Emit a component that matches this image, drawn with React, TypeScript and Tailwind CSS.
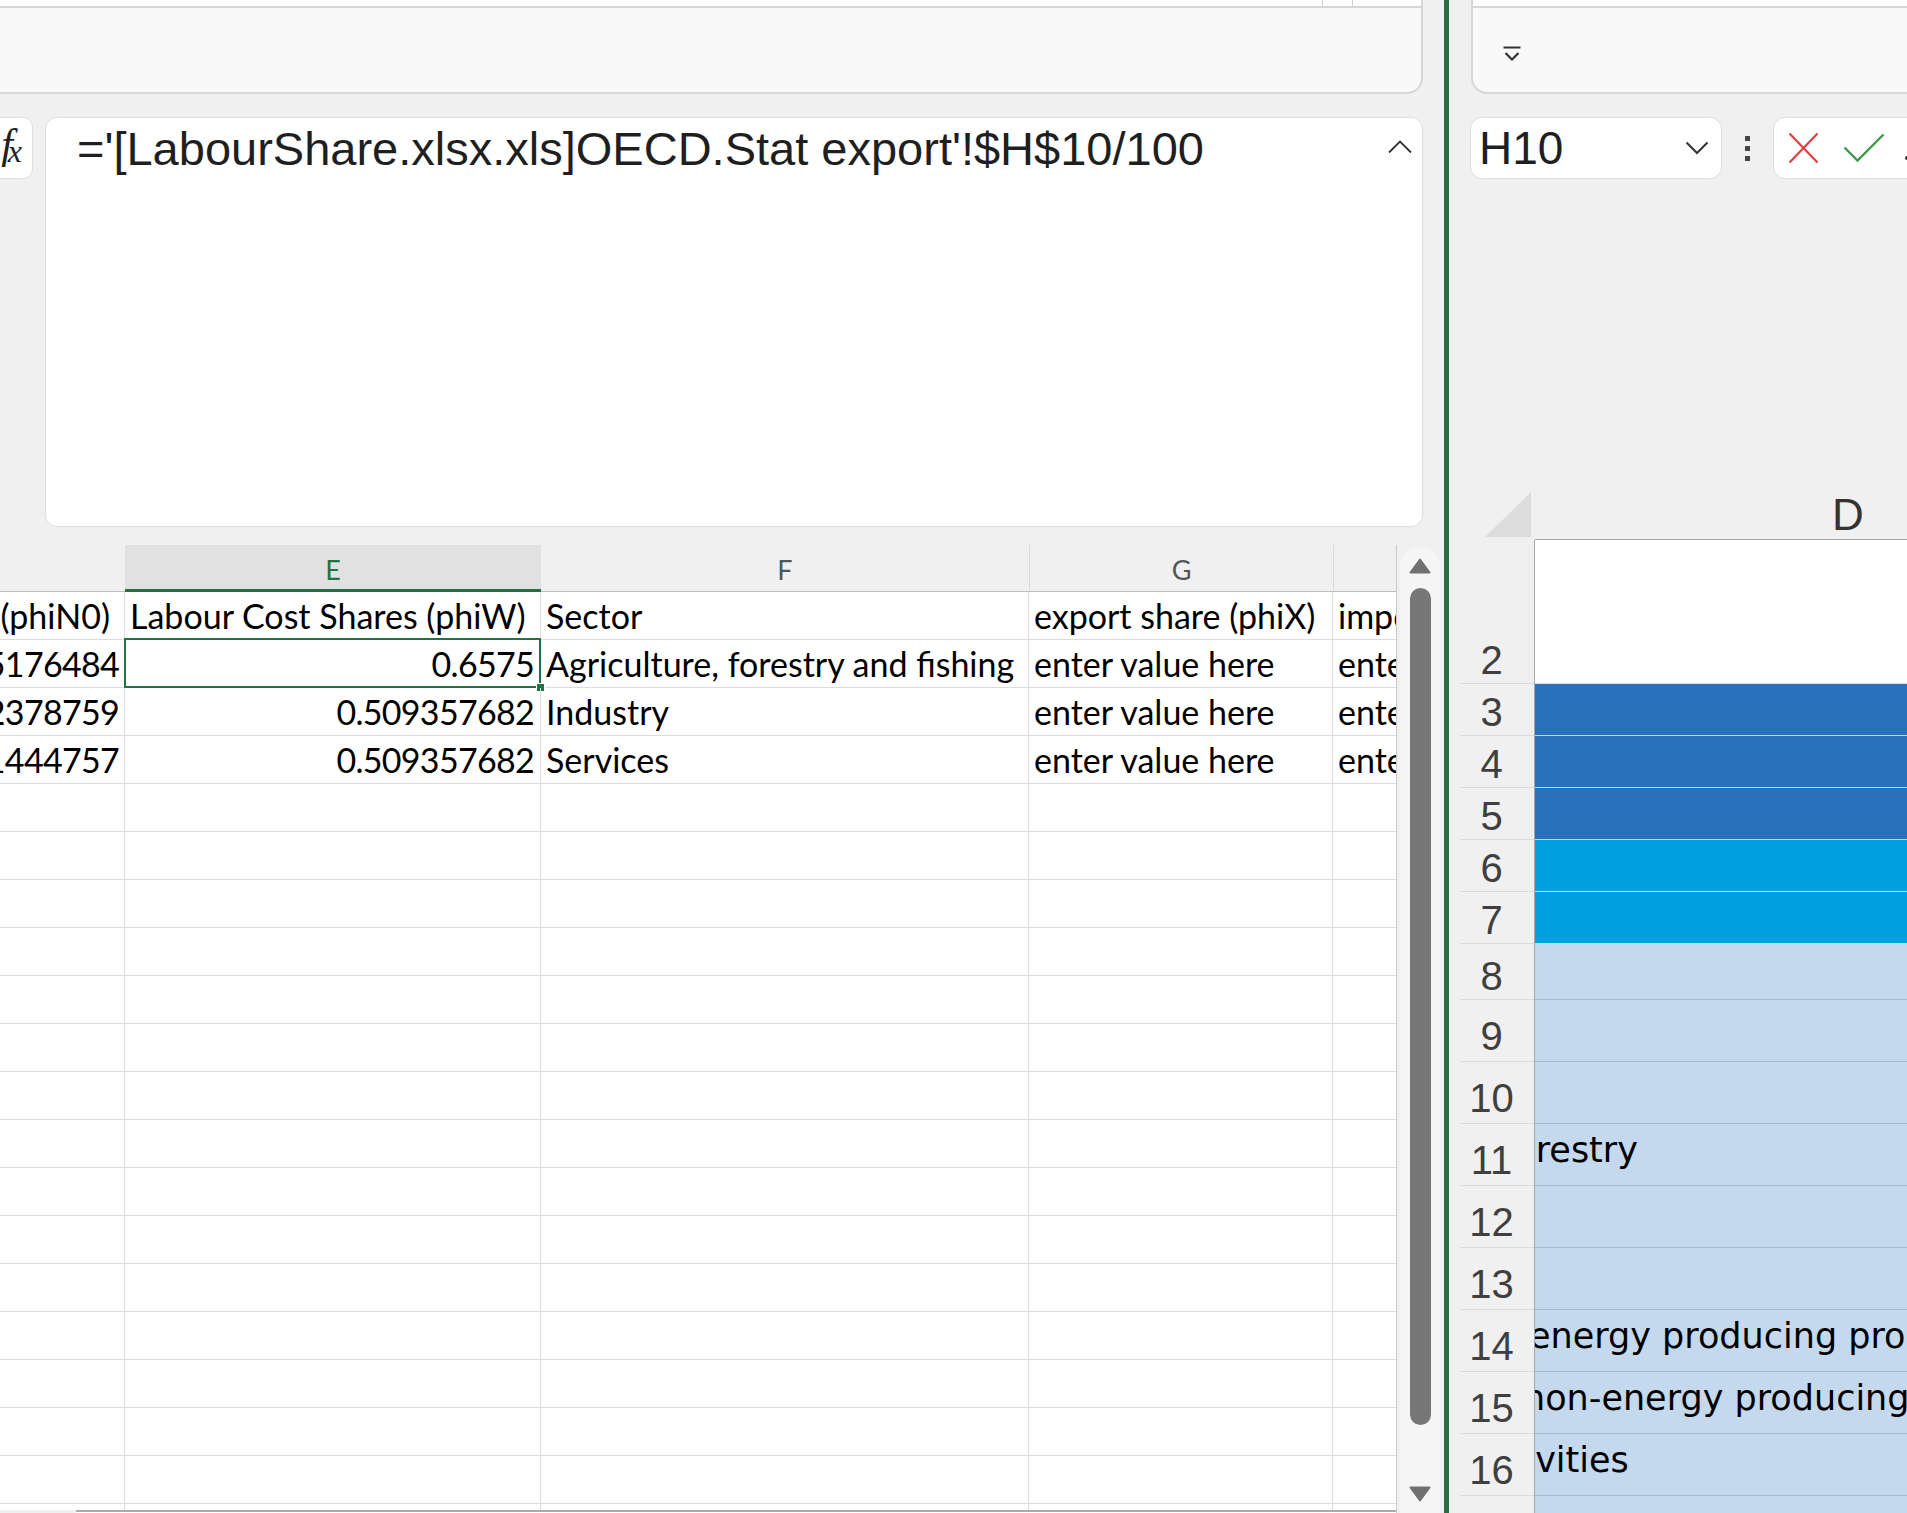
import React from 'react';

type LeftRow = { d: string; e: string; eNum: boolean; f: string; g: string; h: string };

const leftRows: LeftRow[] = [
  { d: 'Parameter (phiN0)', e: 'Labour Cost Shares (phiW)', eNum: false, f: 'Sector', g: 'export share (phiX)', h: 'import share (phiM)' },
  { d: '0.525176484', e: '0.6575', eNum: true, f: 'Agriculture, forestry and fishing', g: 'enter value here', h: 'enter value here' },
  { d: '0.52378759', e: '0.509357682', eNum: true, f: 'Industry', g: 'enter value here', h: 'enter value here' },
  { d: '0.481444757', e: '0.509357682', eNum: true, f: 'Services', g: 'enter value here', h: 'enter value here' },
];

const emptyRows = Array.from({ length: 16 }, (_, i) => i);

type RightRow = { n: number; h: string; bg: string; text?: string; shift?: string };

const rightRows: RightRow[] = [
  { n: 2, h: 'h-[144px]', bg: 'bg-white border-[#d3dbe6]' },
  { n: 3, h: 'h-[52px]', bg: 'bg-[#2a71bb] border-[#c9d6e6]' },
  { n: 4, h: 'h-[52px]', bg: 'bg-[#2a71bb] border-[#c9d6e6]' },
  { n: 5, h: 'h-[52px]', bg: 'bg-[#2a71bb] border-[#c9d6e6]' },
  { n: 6, h: 'h-[52px]', bg: 'bg-[#00a0e0] border-[#c9e3f2]' },
  { n: 7, h: 'h-[52px]', bg: 'bg-[#00a0e0] border-[#c9d6e6]' },
  { n: 8, h: 'h-[56px]', bg: 'bg-[#c5d9ee] border-[#a9b9cb]' },
  { n: 9, h: 'h-[62px]', bg: 'bg-[#c5d9ee] border-[#a9b9cb]' },
  { n: 10, h: 'h-[62px]', bg: 'bg-[#c5d9ee] border-[#a9b9cb]' },
  { n: 11, h: 'h-[62px]', bg: 'bg-[#c5d9ee] border-[#a9b9cb]', text: 'forestry', shift: '-ml-[33px]' },
  { n: 12, h: 'h-[62px]', bg: 'bg-[#c5d9ee] border-[#a9b9cb]' },
  { n: 13, h: 'h-[62px]', bg: 'bg-[#c5d9ee] border-[#a9b9cb]' },
  { n: 14, h: 'h-[62px]', bg: 'bg-[#c5d9ee] border-[#a9b9cb]', text: 'energy producing products', shift: '-ml-[6px]' },
  { n: 15, h: 'h-[62px]', bg: 'bg-[#c5d9ee] border-[#a9b9cb]', text: 'non-energy producing products', shift: '-ml-[12px]' },
  { n: 16, h: 'h-[62px]', bg: 'bg-[#c5d9ee] border-[#a9b9cb]', text: 'activities', shift: '-ml-[64px]' },
  { n: 17, h: 'h-[62px]', bg: 'bg-[#c5d9ee] border-[#a9b9cb]' },
];

function ScrollArrow({ down }: { down?: boolean }) {
  return (
    <svg width="22" height="16" viewBox="0 0 22 16" className={down ? 'rotate-180' : ''}>
      <path d="M11 1.5 L20.5 14.5 L1.5 14.5 Z" fill="#707070" stroke="#707070" strokeWidth="2" strokeLinejoin="round" />
    </svg>
  );
}

function LeftPane() {
  return (
    <div className="flex w-[1444px] shrink-0 flex-col">
      {/* ribbon strip */}
      <div className="h-[94px] w-[1423px] shrink-0 overflow-hidden rounded-br-[16px] border-r-2 border-b-2 border-[#d6d6d6] bg-[#f9f9f9]">
        <div className="flex h-[8px] border-b-2 border-[#d6d6d6] bg-white">
          <div className="ml-[1322px] w-[31px] border-x border-[#d0d0d0]" />
        </div>
      </div>

      {/* formula bar */}
      <div className="mt-[23px] flex h-[410px] shrink-0">
        <div className="-ml-[20px] flex h-[62px] w-[53px] shrink-0 items-start justify-end rounded-[10px] border border-[#dedede] bg-white pr-[10px] pt-[5px] font-['Liberation_Serif',serif] italic text-[#1f1f1f]">
          <span className="text-[42px] leading-[42px]">f</span>
          <span className="-ml-[5px] mt-[12px] text-[32px] leading-[32px]">x</span>
        </div>
        <div className="ml-[12px] flex w-[1378px] rounded-[12px] border border-[#dedede] bg-white">
          <div className="flex-1 whitespace-nowrap pl-[31px] pt-[4px] text-[47px] leading-[54px] text-[#1f1f1f]">
            ='[LabourShare.xlsx.xls]OECD.Stat export'!$H$10/100
          </div>
          <svg width="26" height="14" viewBox="0 0 26 14" className="mr-[9px] mt-[22px]">
            <path d="M2 12.5 L13 1.5 L24 12.5" fill="none" stroke="#333" strokeWidth="1.8" />
          </svg>
        </div>
      </div>

      {/* grid + vertical scrollbar */}
      <div className="mt-[18px] flex min-h-0 flex-1">
        <div className="flex w-[1397px] shrink-0 flex-col overflow-hidden border-r border-[#c9c9c9] font-['Lato',sans-serif] text-[34px] text-black">
          <div className="flex h-[47px] shrink-0 text-[27px] leading-none text-[#555]">
            <div className="w-[125px] shrink-0 border-b border-[#bdbdbd]" />
            <div className="flex w-[416px] shrink-0 items-end justify-center border-b-[3px] border-[#217346] bg-[#e1e1e1] pb-[6px] text-[#217346]">E</div>
            <div className="flex w-[488px] shrink-0 items-end justify-center border-b border-[#bdbdbd] pb-[8px]">F</div>
            <div className="flex w-[304px] shrink-0 items-end justify-center border-b border-l border-[#bdbdbd] border-l-[#dadada] pb-[8px]">G</div>
            <div className="w-[64px] shrink-0 border-b border-l border-[#bdbdbd] border-l-[#dadada]" />
          </div>

          <div className="min-h-0 flex-1 overflow-hidden bg-white leading-[48px]">
            {leftRows.map((r, i) => (
              <div key={i} className="flex h-[48px] border-b border-[#dcdcdc]">
                <div className={`flex w-[125px] shrink-0 justify-end overflow-hidden whitespace-nowrap border-r border-[#dcdcdc] ${i === 0 ? 'pr-[14px]' : 'pr-[5px] tracking-[-0.7px]'}`}>
                  {r.d}
                </div>
                <div className={`relative flex w-[416px] shrink-0 whitespace-nowrap border-r border-[#dcdcdc] ${r.eNum ? 'justify-end pr-[6px] tracking-[-0.7px]' : 'pl-[5px]'}`}>
                  {r.e}
                  {i === 1 && (
                    <>
                      <div className="pointer-events-none absolute -left-px -top-[2px] -right-px -bottom-px border-2 border-[#217346]" />
                      <div className="pointer-events-none absolute -bottom-[5px] -right-[5px] h-[9px] w-[9px] border border-white bg-[#217346]" />
                    </>
                  )}
                </div>
                <div className="w-[488px] shrink-0 overflow-hidden whitespace-nowrap border-r border-[#dcdcdc] pl-[5px]">{r.f}</div>
                <div className="w-[304px] shrink-0 overflow-hidden whitespace-nowrap border-r border-[#dcdcdc] pl-[5px]">{r.g}</div>
                <div className="w-[64px] shrink-0 overflow-hidden whitespace-nowrap pl-[5px]">{r.h}</div>
              </div>
            ))}
            {emptyRows.map((i) => (
              <div key={`e${i}`} className="flex h-[48px] border-b border-[#dcdcdc]">
                <div className="w-[125px] shrink-0 border-r border-[#dcdcdc]" />
                <div className="w-[416px] shrink-0 border-r border-[#dcdcdc]" />
                <div className="w-[488px] shrink-0 border-r border-[#dcdcdc]" />
                <div className="w-[304px] shrink-0 border-r border-[#dcdcdc]" />
                <div className="w-[64px] shrink-0" />
              </div>
            ))}
          </div>
          <div className="ml-[76px] h-[3px] shrink-0 border-t-2 border-[#ababab] bg-white" />
        </div>

        <div className="flex w-[47px] shrink-0 pl-[3px] pr-[4px] pt-[2px]">
          <div className="flex flex-1 flex-col items-center rounded-t-[20px] bg-[#f5f5f5] pt-[11px]">
            <ScrollArrow />
            <div className="mt-[14px] h-[837px] w-[21px] rounded-full bg-[#777777]" />
            <div className="mt-[61px]">
              <ScrollArrow down />
            </div>
          </div>
        </div>
      </div>
    </div>
  );
}

function RightPane() {
  return (
    <div className="flex min-w-0 flex-1 flex-col overflow-hidden">
      {/* ribbon strip */}
      <div className="ml-[22px] h-[94px] w-[600px] shrink-0 overflow-hidden rounded-bl-[16px] border-l-2 border-b-2 border-[#d6d6d6] bg-[#f9f9f9]">
        <div className="h-[8px] border-b-2 border-[#d6d6d6] bg-white" />
        <div className="pl-[29px] pt-[38px]">
          <svg width="20" height="18" viewBox="0 0 20 18">
            <path d="M1.5 1.5 H18.5" stroke="#333" strokeWidth="2" />
            <path d="M3.5 7 L10 13.5 L16.5 7" fill="none" stroke="#333" strokeWidth="2.2" />
          </svg>
        </div>
      </div>

      {/* name box + buttons */}
      <div className="mt-[23px] flex h-[62px] shrink-0">
        <div className="ml-[21px] flex w-[252px] shrink-0 items-center justify-between rounded-[12px] border border-[#dedede] bg-white pl-[8px] pr-[12px]">
          <span className="text-[46px] leading-none text-[#1f1f1f]">H10</span>
          <svg width="24" height="14" viewBox="0 0 24 14">
            <path d="M1.5 1.5 L12 12 L22.5 1.5" fill="none" stroke="#333" strokeWidth="2" />
          </svg>
        </div>
        <div className="ml-[23px] flex w-[5px] shrink-0 flex-col justify-center gap-[5px]">
          <div className="h-[5px] w-[5px] bg-[#444]" />
          <div className="h-[5px] w-[5px] bg-[#444]" />
          <div className="h-[5px] w-[5px] bg-[#444]" />
        </div>
        <div className="ml-[23px] flex w-[300px] shrink-0 items-center rounded-l-[12px] border border-[#dedede] bg-white pl-[14px]">
          <svg width="31" height="32" viewBox="0 0 31 32">
            <path d="M1.5 1.5 L29.5 30.5 M29.5 1.5 L1.5 30.5" stroke="#e04040" strokeWidth="2.2" />
          </svg>
          <svg width="42" height="30" viewBox="0 0 42 30" className="ml-[24px]">
            <path d="M1.5 14.5 L14.5 27.5 L40.5 1.5" fill="none" stroke="#3a9a4a" strokeWidth="2.4" />
          </svg>
          <div className="ml-[20px] mt-[20px] h-[4px] w-[4px] rounded-full bg-[#333]" />
        </div>
      </div>

      {/* sheet */}
      <div className="mt-[314px] flex min-h-0 flex-1 flex-col font-['Liberation_Sans',Arial,sans-serif]">
        <div className="flex h-[47px] shrink-0">
          <div className="flex w-[86px] shrink-0 items-end justify-end pb-[3px] pr-[4px]">
            <svg width="46" height="45" viewBox="0 0 46 45">
              <path d="M46 0 L46 45 L0 45 Z" fill="#dcdcdc" />
            </svg>
          </div>
          <div className="flex flex-1 items-end border-b border-[#a6a6a6] pb-[2px] pl-[297px] text-[44px] leading-none text-[#333]">D</div>
        </div>
        {rightRows.map((r) => (
          <div key={r.n} className={`flex shrink-0 ${r.h}`}>
            <div className="flex w-[86px] shrink-0 border-r border-[#a6a6a6] bg-[#f0f0f0]">
              <div className={`ml-[11px] flex flex-1 items-end justify-center border-b border-[#dadada] pr-[11px] text-[40px] leading-none text-[#3f3f3f] ${r.n < 9 ? 'pb-[3px]' : 'pb-[5px]'}`}>
                {r.n}
              </div>
            </div>
            <div className={`flex flex-1 items-start overflow-hidden whitespace-nowrap border-b font-['DejaVu_Sans',sans-serif] text-[35px] text-black ${r.bg}`}>
              {r.text && <span className={r.shift}>{r.text}</span>}
            </div>
          </div>
        ))}
      </div>
    </div>
  );
}

export default function App() {
  return (
    <div className="flex h-[1513px] w-[1907px] overflow-hidden bg-[#f0f0f0] font-['Liberation_Sans',Arial,sans-serif]">
      <LeftPane />
      <div className="w-[5px] shrink-0 bg-[#2c6b46]" />
      <RightPane />
    </div>
  );
}
